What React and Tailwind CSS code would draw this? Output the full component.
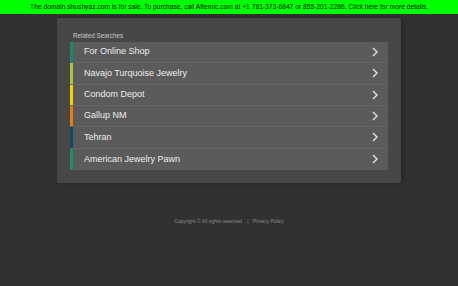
const searches = [
  { label: 'For Online Shop', color: 'bg-[#1b8a6d]' },
  { label: 'Navajo Turquoise Jewelry', color: 'bg-[#a8c83a]' },
  { label: 'Condom Depot', color: 'bg-[#f3d500]' },
  { label: 'Gallup NM', color: 'bg-[#ee7a0c]' },
  { label: 'Tehran', color: 'bg-[#0e4a5b]' },
  { label: 'American Jewelry Pawn', color: 'bg-[#1d8c70]' },
];

const Chevron = () => (
  <svg width="6" height="10" viewBox="0 0 6 10" fill="none">
    <path d="M1 1l4 4-4 4" stroke="#dcdcdc" strokeWidth="1.5" />
  </svg>
);

export default function App() {
  return (
    <div className="min-h-[286px] bg-[#313131] font-['Liberation_Sans',Arial,sans-serif]">
      {/* Sale banner */}
      <div className="h-[14px] bg-[#00ff00] flex items-center justify-center text-[6.7px] text-[#111] whitespace-nowrap">
        The domain shushyaz.com is for sale. To purchase, call Afternic.com at +1 781-373-6847 or 855-201-2286. Click here for more details.
      </div>

      <div className="pt-[4px] flex justify-center">
        <div className="w-[344px] bg-[#474747] rounded-[2px] px-[13px] pt-[14px] pb-[13px] shadow-[2px_0_4px_rgba(0,0,0,0.25)]">
          <div className="text-[6.3px] text-[#c8c8c8] pl-[3px] mb-[3px] leading-[7px]">Related Searches</div>
          <div className="flex flex-col">
            {searches.map((s) => (
              <div key={s.label} className="h-[21.33px] flex items-stretch bg-[#5b5b5b] border-b border-[#646464] last:border-b-0">
                <div className={`w-[3px] ${s.color}`} />
                <div className="flex-1 flex items-center justify-between pl-[11px] pr-[10px]">
                  <span className="text-[9px] text-[#ededed]">{s.label}</span>
                  <Chevron />
                </div>
              </div>
            ))}
          </div>
        </div>
      </div>

      <div className="mt-[35px] text-center text-[5px] text-[#8a8a8a]">
        Copyright © All rights reserved.&nbsp;&nbsp;&nbsp;|&nbsp;&nbsp;&nbsp;Privacy Policy
      </div>
    </div>
  );
}
